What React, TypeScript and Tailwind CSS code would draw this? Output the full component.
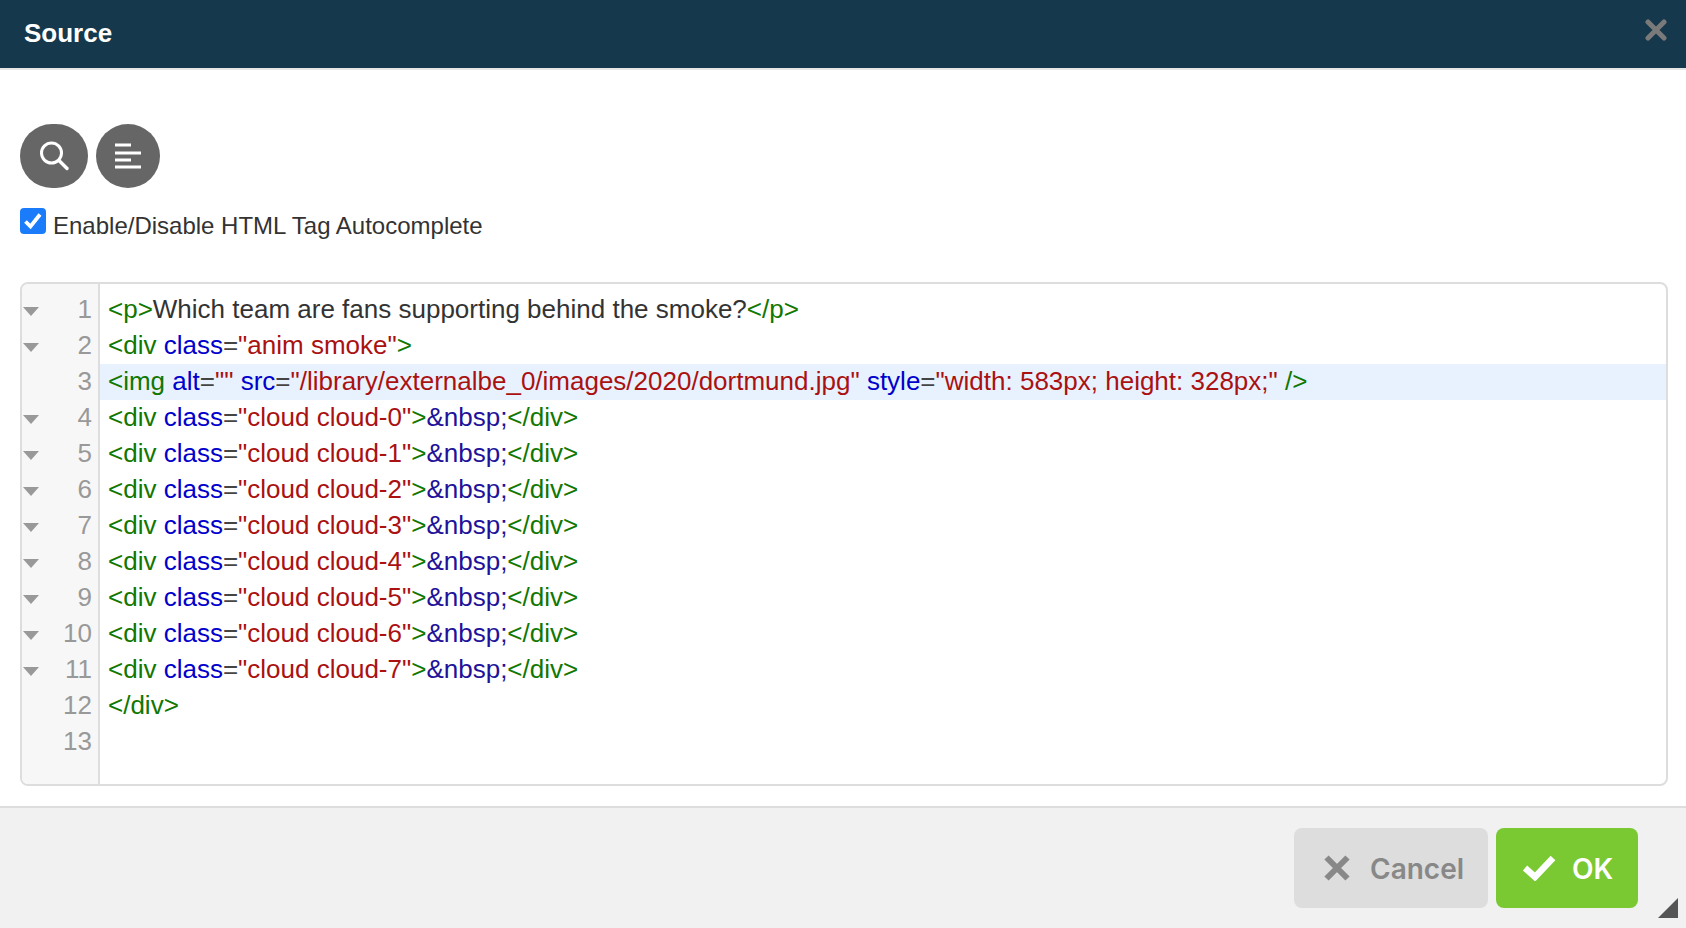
import React from 'react'

type Tok = [string, string]

const TAG = 'text-[#117700]'
const ATTR = 'text-[#0000cc]'
const STR = 'text-[#aa1111]'
const ENT = 'text-[#221199]'
const TXT = 'text-[#333333]'
const EQ = 'text-[#444444]'

function cloudLine(n: number): Tok[] {
  return [
    [TAG, '<div'],
    [TXT, ' '],
    [ATTR, 'class'],
    [EQ, '='],
    [STR, `"cloud cloud-${n}"`],
    [TAG, '>'],
    [ENT, '&nbsp;'],
    [TAG, '</div>'],
  ]
}

const lines: { fold: boolean; active?: boolean; toks: Tok[] }[] = [
  { fold: true, toks: [[TAG, '<p>'], [TXT, 'Which team are fans supporting behind the smoke?'], [TAG, '</p>']] },
  { fold: true, toks: [[TAG, '<div'], [TXT, ' '], [ATTR, 'class'], [EQ, '='], [STR, '"anim smoke"'], [TAG, '>']] },
  {
    fold: false,
    active: true,
    toks: [
      [TAG, '<img'],
      [TXT, ' '],
      [ATTR, 'alt'],
      [EQ, '='],
      [STR, '""'],
      [TXT, ' '],
      [ATTR, 'src'],
      [EQ, '='],
      [STR, '"/library/externalbe_0/images/2020/dortmund.jpg"'],
      [TXT, ' '],
      [ATTR, 'style'],
      [EQ, '='],
      [STR, '"width: 583px; height: 328px;"'],
      [TXT, ' '],
      [TAG, '/>'],
    ],
  },
  { fold: true, toks: cloudLine(0) },
  { fold: true, toks: cloudLine(1) },
  { fold: true, toks: cloudLine(2) },
  { fold: true, toks: cloudLine(3) },
  { fold: true, toks: cloudLine(4) },
  { fold: true, toks: cloudLine(5) },
  { fold: true, toks: cloudLine(6) },
  { fold: true, toks: cloudLine(7) },
  { fold: false, toks: [[TAG, '</div>']] },
  { fold: false, toks: [] },
]

function FoldArrow() {
  return (
    <svg width="16" height="9" viewBox="0 0 16 9" className="ml-[1px] mt-[2px] shrink-0">
      <polygon points="0,0 16,0 8,9" fill="#999999" />
    </svg>
  )
}

function App() {
  return (
    <main className="flex flex-col w-screen h-screen overflow-hidden bg-white font-['Liberation_Sans',Arial,sans-serif]">
      <header className="flex items-start justify-between h-[70px] shrink-0 bg-[#16384c] border-b-2 border-[#e6e6e6] pl-6 pr-[19px]">
        <h1 className="text-[26px] leading-[66px] font-bold text-white">Source</h1>
        <svg width="22" height="22" viewBox="0 0 22 22" className="mt-[19px]">
          <path d="M3 3 L19 19 M19 3 L3 19" stroke="#7a7a7a" strokeWidth="5" strokeLinecap="round" />
        </svg>
      </header>

      <section className="flex flex-col flex-1 min-h-0 pl-5 pr-[18px] pt-[54px] pb-5">
        <div className="flex gap-2">
          <button className="flex items-center justify-center w-[68px] h-16 rounded-full bg-[#666666]">
            <svg width="32" height="32" viewBox="0 0 32 32">
              <circle cx="13.5" cy="13" r="10" fill="none" stroke="white" strokeWidth="3" />
              <path d="M21 20.5 L29 28.5" stroke="white" strokeWidth="3.4" strokeLinecap="round" />
            </svg>
          </button>
          <button className="flex items-center justify-center w-16 h-16 rounded-full bg-[#666666]">
            <svg width="26" height="26" viewBox="0 0 26 26">
              <path d="M0 2 H16 M0 10 H26 M0 17 H16 M0 24 H26" stroke="white" strokeWidth="3" />
            </svg>
          </button>
        </div>

        <label className="flex items-start mt-5 h-[28px]">
          <span className="flex items-center justify-center w-[26px] h-[26px] rounded-[4px] bg-[#1a7cfa] shrink-0">
            <svg width="20" height="20" viewBox="0 0 20 20">
              <path d="M2.5 10.5 L7.5 15.5 L17 3.5" fill="none" stroke="white" strokeWidth="3.8" />
            </svg>
          </span>
          <span className="ml-[7px] mt-[3px] text-[24px] leading-[30px] text-[#333333]">
            Enable/Disable HTML Tag Autocomplete
          </span>
        </label>

        <div className="flex flex-col flex-1 min-h-0 mt-[46px] overflow-hidden rounded-lg border-2 border-[#dddddd] text-[26px] leading-[34px]">
          <div className="flex h-2 shrink-0">
            <div className="w-[78px] shrink-0 bg-[#f7f7f7] border-r-2 border-[#dddddd]" />
          </div>
          {lines.map((line, i) => (
            <div key={i} className="flex h-9 shrink-0">
              <div className="flex items-center w-[78px] shrink-0 bg-[#f7f7f7] border-r-2 border-[#dddddd] pr-[6px]">
                {line.fold && <FoldArrow />}
                <span className="ml-auto self-start text-[#999999]">{i + 1}</span>
              </div>
              <div className={`flex-1 pl-2 whitespace-pre ${line.active ? 'bg-[#e8f2ff]' : ''}`}>
                {line.toks.map((t, j) => (
                  <span key={j} className={t[0]}>
                    {t[1]}
                  </span>
                ))}
              </div>
            </div>
          ))}
          <div className="flex flex-1">
            <div className="w-[78px] shrink-0 bg-[#f7f7f7] border-r-2 border-[#dddddd]" />
          </div>
        </div>
      </section>

      <footer className="relative flex justify-end gap-2 h-[122px] shrink-0 bg-[#f1f1f1] border-t-2 border-[#dddddd] pt-5 pr-12">
        <button className="flex items-center w-[194px] h-20 rounded-lg bg-[#dddddd] pl-[30px] text-[28px] font-['Inter',sans-serif] font-semibold text-[#888888]">
          <svg width="26" height="26" viewBox="0 0 26 26" className="shrink-0">
            <path d="M2.5 2.5 L23.5 23.5 M23.5 2.5 L2.5 23.5" stroke="#888888" strokeWidth="6" />
          </svg>
          <span className="ml-[20px] mt-[1px]">Cancel</span>
        </button>
        <button className="flex items-center w-[142px] h-20 rounded-lg bg-[#7ac832] pl-[26px] text-[28px] font-['Inter',sans-serif] font-semibold text-white">
          <svg width="34" height="26" viewBox="0 0 34 26" className="shrink-0">
            <path d="M3 13 L13 22 L31 3" fill="none" stroke="white" strokeWidth="6.5" />
          </svg>
          <span className="ml-[16px] mt-[1px]">OK</span>
        </button>
        <svg width="20" height="20" viewBox="0 0 20 20" className="absolute right-2 bottom-[10px]">
          <polygon points="20,0 20,20 0,20" fill="#555555" />
        </svg>
      </footer>
    </main>
  )
}

export default App
